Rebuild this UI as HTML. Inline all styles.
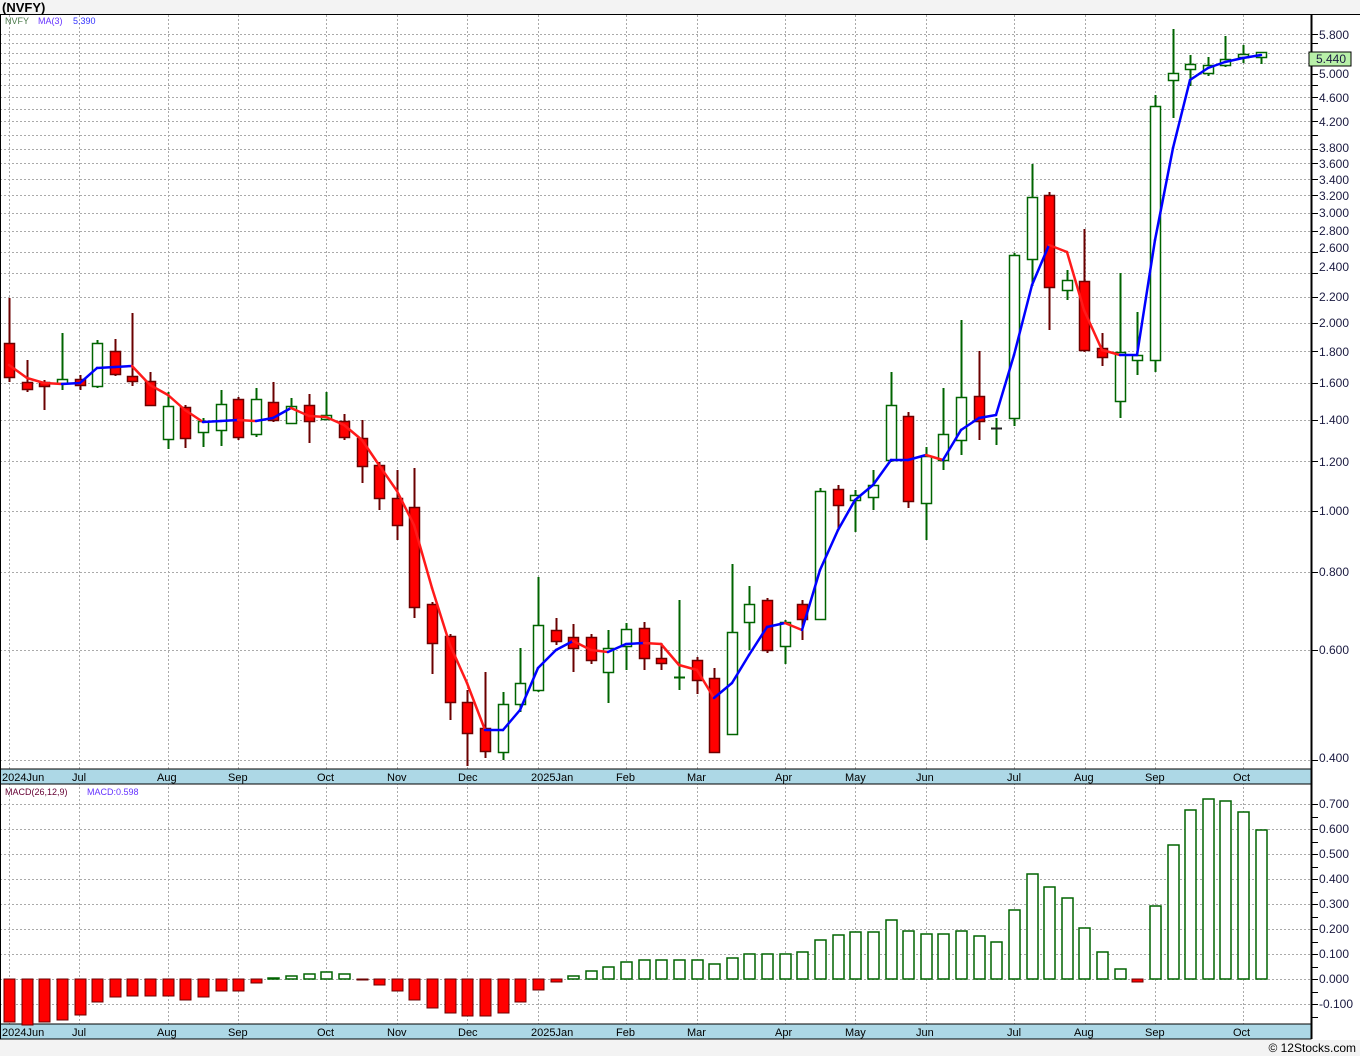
<!DOCTYPE html>
<html><head><meta charset="utf-8"><style>
html,body{margin:0;padding:0;background:#f3f3f3;}
body{width:1360px;height:1056px;overflow:hidden;position:relative;font-family:"Liberation Sans",sans-serif;}
svg{position:absolute;left:0;top:0;}
text{font-family:"Liberation Sans",sans-serif;}
</style></head><body>
<svg id="s" width="1360" height="1056" xmlns="http://www.w3.org/2000/svg">
<rect x="0" y="0" width="1360" height="1056" fill="#f3f3f3"/>
<rect x="0" y="14" width="1360" height="1026" fill="#fff"/>
<text x="2" y="12" font-size="13" font-weight="bold" fill="#000">(NVFY)</text>
<g id="grid" stroke="#aaa" stroke-dasharray="2,2" stroke-width="1"></g>
<rect x="0" y="769" width="1311" height="15" fill="#add8e6" stroke="#000" stroke-width="1"/>
<rect x="0" y="1024" width="1311" height="15" fill="#add8e6" stroke="#000" stroke-width="1"/>
<line x1="0" y1="14.5" x2="1360" y2="14.5" stroke="#000"/>
<line x1="1311.5" y1="14" x2="1311.5" y2="1039" stroke="#000" stroke-width="2"/>
<line x1="0.5" y1="14" x2="0.5" y2="1039" stroke="#000"/>
<g id="c"></g>
<g font-size="11" fill="#000">
<text x="2" y="781">2024Jun</text><text x="72" y="781">Jul</text><text x="157" y="781">Aug</text><text x="228" y="781">Sep</text><text x="317" y="781">Oct</text><text x="387" y="781">Nov</text><text x="458" y="781">Dec</text><text x="531" y="781">2025Jan</text><text x="616" y="781">Feb</text><text x="687" y="781">Mar</text><text x="775" y="781">Apr</text><text x="845" y="781">May</text><text x="916" y="781">Jun</text><text x="1007" y="781">Jul</text><text x="1074" y="781">Aug</text><text x="1145" y="781">Sep</text><text x="1233" y="781">Oct</text>
<text x="2" y="1036">2024Jun</text><text x="72" y="1036">Jul</text><text x="157" y="1036">Aug</text><text x="228" y="1036">Sep</text><text x="317" y="1036">Oct</text><text x="387" y="1036">Nov</text><text x="458" y="1036">Dec</text><text x="531" y="1036">2025Jan</text><text x="616" y="1036">Feb</text><text x="687" y="1036">Mar</text><text x="775" y="1036">Apr</text><text x="845" y="1036">May</text><text x="916" y="1036">Jun</text><text x="1007" y="1036">Jul</text><text x="1074" y="1036">Aug</text><text x="1145" y="1036">Sep</text><text x="1233" y="1036">Oct</text>
</g>
<g font-size="9" ><text x="5" y="24" fill="#4a7a4a">NVFY</text><text x="38" y="24" fill="#6633ff">MA(3)</text><text x="73" y="24" fill="#3333ff">5.390</text>
<text x="5" y="795" fill="#660033">MACD(26,12,9)</text><text x="87" y="795" fill="#6633ff">MACD:0.598</text></g>
<g font-size="12" fill="#1a1a40">
<text x="1319" y="39">5.800</text><text x="1319" y="78">5.000</text><text x="1319" y="102">4.600</text><text x="1319" y="126">4.200</text><text x="1319" y="152">3.800</text><text x="1319" y="168">3.600</text><text x="1319" y="184">3.400</text><text x="1319" y="200">3.200</text><text x="1319" y="217">3.000</text><text x="1319" y="235">2.800</text><text x="1319" y="252">2.600</text><text x="1319" y="271">2.400</text><text x="1319" y="301">2.200</text><text x="1319" y="327">2.000</text><text x="1319" y="356">1.800</text><text x="1319" y="387">1.600</text><text x="1319" y="424">1.400</text><text x="1319" y="466">1.200</text><text x="1319" y="515">1.000</text><text x="1319" y="576">0.800</text><text x="1319" y="654">0.600</text><text x="1319" y="762">0.400</text>
<text x="1319" y="808">0.700</text><text x="1319" y="833">0.600</text><text x="1319" y="858">0.500</text><text x="1319" y="883">0.400</text><text x="1319" y="908">0.300</text><text x="1319" y="933">0.200</text><text x="1319" y="958">0.100</text><text x="1319" y="983">0.000</text><text x="1319" y="1008">-0.100</text>
</g>
<rect x="1309" y="52" width="42" height="14" fill="#b8f0a8" stroke="#000"/>
<text x="1316" y="63" font-size="12" fill="#1a1a40">5.440</text>
<rect x="0" y="1040" width="1360" height="16" fill="#f3f3f3"/>
<text x="1356" y="1052" font-size="12" text-anchor="end" fill="#000">© 12Stocks.com</text>
</svg>
<script>
var NS="http://www.w3.org/2000/svg";
function el(p,t,a){var e=document.createElementNS(NS,t);for(var k in a)e.setAttribute(k,a[k]);p.appendChild(e);return e;}
var g=document.getElementById('grid'),c=document.getElementById('c');
var Y=function(p){return 511-271.5*Math.log(p);};
var lv=[5.8,5.6,5.4,5.2,5.0,4.8,4.6,4.4,4.2,4.0,3.8,3.6,3.4,3.2,3.0,2.8,2.6,2.4,2.2,2.0,1.8,1.6,1.4,1.2,1.0,0.8,0.6,0.4];
lv.forEach(function(p){var y=Math.round(Y(p))+.5;el(g,'line',{x1:0,y1:y,x2:1311,y2:y});el(c,'line',{x1:1311,y1:y,x2:1318,y2:y,stroke:'#000'});});
for(var v=-0.15;v<=0.75;v+=0.05){var y=Math.round(979-250*v)+.5;if(Math.abs(Math.round(v*100)%10)<1)el(g,'line',{x1:0,y1:y,x2:1311,y2:y});el(c,'line',{x1:1311,y1:y,x2:1318,y2:y,stroke:'#000'});}
[9,79,168,238,326,397,467,538,626,697,785,855,926,1014,1085,1155,1243].forEach(function(x){el(g,'line',{x1:x+.5,y1:15,x2:x+.5,y2:1024});});
var d=[[343,377,298,382,1],[382,389,360,392,1],[382,386,380,410,1],[379,383,333,390,0],[379,385,375,390,1],[343,386,340,388,0],[351,374,339,376,1],[376,381,313,386,1],[381,405,372,406,1],[406,439,392,449,0],[407,438,405,448,1],[421,432,418,447,0],[404,430,390,446,0],[399,437,397,440,1],[399,434,388,437,0],[402,420,382,422,1],[406,423,398,424,0],[405,421,394,443,1],[415,419,392,420,0],[421,437,414,440,1],[438,466,420,483,1],[465,498,462,510,1],[498,525,470,540,1],[507,607,468,618,1],[604,643,602,674,1],[636,702,634,720,1],[702,733,690,766,1],[728,751,672,758,1],[704,752,692,760,0],[683,704,648,712,0],[625,690,577,692,0],[630,641,618,645,1],[637,648,624,672,1],[637,660,634,664,1],[648,672,630,703,0],[629,646,623,670,0],[628,658,622,670,1],[658,663,643,670,1],[677,678,600,690,2],[660,680,657,694,1],[678,752,668,752,1],[632,734,564,735,0],[604,622,586,650,0],[600,650,598,653,1],[622,646,620,664,0],[604,619,600,640,1],[491,619,488,620,0],[489,505,485,530,1],[495,500,490,532,0],[485,497,470,510,0],[405,460,372,462,0],[416,501,412,508,1],[456,503,447,540,0],[434,460,388,470,0],[397,440,320,455,0],[396,421,351,440,1],[428,429,418,445,3],[255,418,253,426,0],[197,259,164,286,0],[195,287,192,330,1],[280,290,270,300,0],[281,350,229,352,1],[348,357,333,366,1],[352,401,273,418,0],[355,360,312,375,0],[106,360,95,372,0],[73,80,29,118,0],[64,69,55,86,0],[65,73,57,76,0],[59,65,36,67,0],[54,57,45,63,0],[52,57,52,64,0]];
var X=function(i){return Math.round(9+i*17.63);};
d.forEach(function(a,i){var x=X(i);var red=a[4]==1;var col=red?'#6b0000':'#006400';
 el(c,'line',{x1:x+.5,y1:a[2],x2:x+.5,y2:a[3],stroke:col,'stroke-width':2});
 if(a[4]>=2){el(c,'line',{x1:x-5,y1:a[0]+.5,x2:x+6,y2:a[0]+.5,stroke:a[4]==3?'#222':'#006400','stroke-width':2});return;}
 el(c,'rect',{x:x-4.5,y:a[0]+.5,width:10,height:Math.max(a[1]-a[0],3),fill:red?'#ff0000':'#fff',stroke:col,'stroke-width':1.5});});
var m=[365,378,383,384,383,368,367,366,385,395,410,422,421,420,421,418,408,416,417,425,440,465,491,525,588,645,683,730,730,710,668,650,641,650,652,644,643,644,665,670,698,683,655,627,623,630,570,530,500,485,460,460,455,460,430,418,415,355,285,245,252,310,350,355,355,240,148,80,68,62,58,55];
for(var i=1;i<m.length;i++){el(c,'line',{x1:X(i-1),y1:m[i-1],x2:X(i),y2:m[i],stroke:m[i]>m[i-1]?'#ff1a1a':'#0000ff','stroke-width':2.5,'stroke-linecap':'round'});}
var h=[1022,1025,1022,1020,1015,1002,997,996,996,996,1000,997,991,991,983,978,976,974,972,974,980,985,991,1000,1008,1013,1016,1016,1013,1002,990,982,976,971,967,962,960,960,960,960,964,958,954,954,954,952,940,935,932,932,920,931,934,934,931,936,942,910,874,887,898,928,952,969,982,906,845,810,799,801,812,830];
h.forEach(function(v,i){var x=X(i);if(v>979){el(c,'rect',{x:x-5,y:979,width:11,height:v-979,fill:'#ff0000',stroke:'#6b0000','stroke-width':1});}else{el(c,'rect',{x:x-5,y:v,width:11,height:Math.max(979-v,1),fill:'#fff',stroke:'#006400','stroke-width':1.5});}});
</script>
</body></html>
